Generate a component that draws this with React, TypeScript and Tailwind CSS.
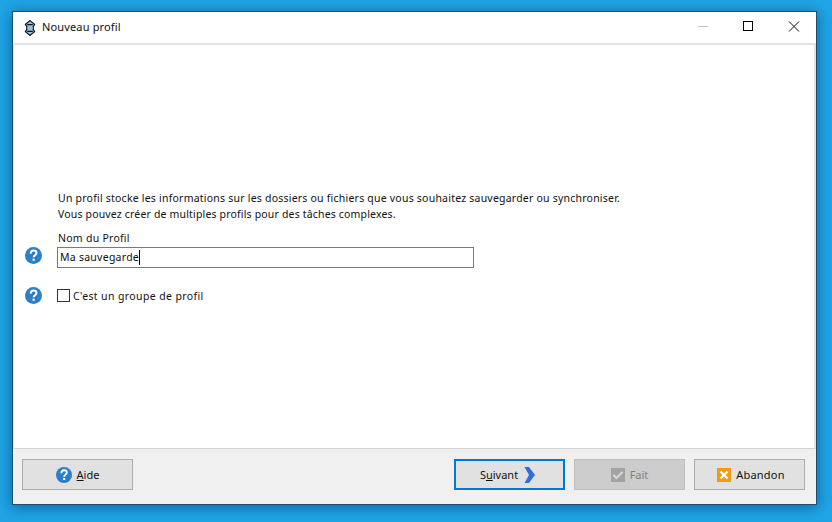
function Help({ size = 17 }: { size?: number }) {
  return (
    <svg width={size} height={size} viewBox="0 0 16 16" className="shrink-0">
      <circle cx="8" cy="8" r="8" fill="#2a7fc9" />
      <path d="M5.3 6.2C5.4 4.4 6.6 3.3 8.1 3.3c1.6 0 2.7 1 2.7 2.3 0 1.1-.7 1.7-1.4 2.2-.8.6-1.2 1-1.2 1.9" fill="none" stroke="#fff" strokeWidth="1.9" />
      <rect x="7.1" y="10.9" width="2.1" height="2.1" fill="#fff" />
    </svg>
  );
}

function AppIcon() {
  return (
    <svg width="14" height="16" viewBox="0 0 14 16" className="shrink-0">
      <path d="M7 .6 11.6 4.4 10.2 6.6 10.2 9.4 11.6 11.6 7 15.4 2.4 11.6 3.8 9.4 3.8 6.6 2.4 4.4Z" fill="#8fc4ea" stroke="#111" strokeWidth="1.2" />
      <path d="M4.2 4.6h5.6M4.2 11.4h5.6" stroke="#111" strokeWidth="1.1" />
      <rect x="4.4" y="7.3" width="5.2" height="1.4" fill="#b8b8b8" />
    </svg>
  );
}

function Btn({ children, className }: { children: React.ReactNode; className: string }) {
  return (
    <div className={`w-[111px] h-[31px] flex items-center justify-center gap-[5px] text-[11px] ${className}`}>
      {children}
    </div>
  );
}

export default function App() {
  return (
    <div className="w-[832px] h-[522px] overflow-hidden bg-[#1fa5e6] pt-[11px] pl-[12px] text-[#111] font-['Noto_Sans','Open_Sans',sans-serif]">
      <div className="w-[805px] h-[494px] flex flex-col border border-[#1d4f6e] bg-[#f0f0f0] shadow-[0_2px_14px_rgba(0,40,80,0.55)]">
        <div className="h-[31px] shrink-0 bg-white flex items-center pl-[10px] text-[11px] tracking-[0.15px]">
          <AppIcon />
          <span className="ml-[5px] -mt-[1px]">Nouveau profil</span>
          <div className="ml-auto flex items-center -mt-[3px]">
            <div className="w-[46px] flex justify-center"><div className="ml-[2px] w-[10px] h-px bg-[#c4c4c4]" /></div>
            <div className="w-[46px] flex justify-center"><div className="w-[10px] h-[10px] border border-black" /></div>
            <div className="w-[45px] flex justify-center">
              <svg width="12" height="11" viewBox="0 0 12 11"><path d="M1 .5l10 10M11 .5l-10 10" stroke="#111" strokeWidth="1" /></svg>
            </div>
          </div>
        </div>
        <div className="h-[406px] shrink-0 bg-white border-t-2 border-[#e3e3e3] border-b border-b-[#d4d4d4] border-r-2 border-r-[#e3e3e3] border-l border-l-[#e3e3e3] pl-[11px] pt-[145px] text-[10.5px]">
          <div className="pl-[33px] leading-[16px] whitespace-nowrap">
            <div className="tracking-[0.22px]">Un profil stocke les informations sur les dossiers ou fichiers que vous souhaitez sauvegarder ou synchroniser.</div>
            <div className="tracking-[0.17px]">Vous pouvez créer de multiples profils pour des tâches complexes.</div>
          </div>
          <div className="pl-[33px] mt-[8px] leading-[16px] tracking-[0.26px]">Nom du Profil</div>
          <div className="flex items-center gap-[15px] mt-[1px]">
            <div className="-mt-[5px]"><Help /></div>
            <div className="w-[417px] h-[21px] border border-[#7a7a7a] pl-[2px] flex items-center tracking-[0.26px]">
              Ma sauvegarde<span className="w-px h-[15px] bg-black" />
            </div>
          </div>
          <div className="flex items-center gap-[15px] mt-[18px]">
            <Help />
            <div className="w-[13px] h-[13px] border border-[#333]" />
            <span className="-ml-[12px] pt-[3px] tracking-[0.38px]">C'est un groupe de profil</span>
          </div>
        </div>
        <div className="flex-1 flex items-start pt-[10px] pl-[9px] pr-[11px]">
          <Btn className="border border-[#adadad] bg-[#e1e1e1]">
            <Help size={16} />
            <span className="pt-[1px]"><u>A</u>ide</span>
          </Btn>
          <Btn className="ml-auto border-2 border-[#0078d7] bg-[#e1e1e1] gap-[6px] pr-[4px]">
            <span className="pt-[1px]">S<u>u</u>ivant</span>
            <svg width="11" height="16" viewBox="0 0 11 16"><path d="M.5 0h4.5L11 8l-6 8H.5l4.5-8Z" fill="#2f6fd6" /></svg>
          </Btn>
          <Btn className="ml-[9px] border border-[#bfbfbf] bg-[#cccccc] text-[#7f7f7f]">
            <svg width="14" height="14" viewBox="0 0 14 14"><rect width="14" height="14" fill="#a3a3a3" /><path d="M2.5 7l3 3L11.5 4" fill="none" stroke="#d6d6d6" strokeWidth="2.2" /></svg>
            <span className="pt-[1px]">Fait</span>
          </Btn>
          <Btn className="ml-[9px] border border-[#adadad] bg-[#e1e1e1] pl-[3px]">
            <svg width="14" height="14" viewBox="0 0 14 14"><rect width="14" height="14" fill="#f59a0e" /><path d="M3.5 3.5l7 7M10.5 3.5l-7 7" stroke="#fff" strokeWidth="2.4" /></svg>
            <span className="pt-[1px] tracking-[0.2px]">Abandon</span>
          </Btn>
        </div>
      </div>
    </div>
  );
}
